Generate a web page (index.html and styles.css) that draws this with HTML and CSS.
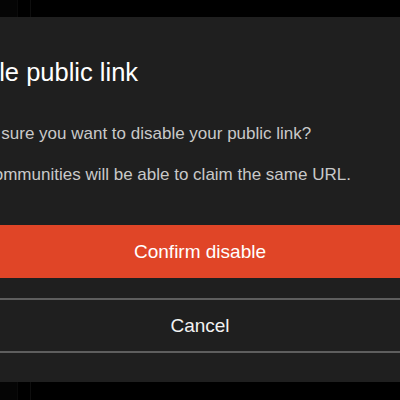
FILE: index.html
```html
<!DOCTYPE html>
<html lang="en">
<head>
<meta charset="utf-8">
<title>Disable public link</title>
<link rel="stylesheet" href="styles.css">
</head>
<body>
<div class="page">
  <div class="rail"></div>
</div>
<div class="overlay">
  <div class="dialog" role="dialog" aria-labelledby="dlg-title">
    <h2 class="title" id="dlg-title">Disable public link</h2>
    <p class="text text-first">Are you sure you want to disable your public link?</p>
    <p class="text">Other communities will be able to claim the same URL.</p>
    <button class="btn btn-confirm" type="button">Confirm disable</button>
    <div class="actions">
      <button class="btn btn-cancel" type="button">Cancel</button>
    </div>
  </div>
</div>
</body>
</html>
```
FILE: styles.css
```css
html, body {
  margin: 0;
  padding: 0;
  height: 100%;
  background: #000;
  overflow: hidden;
  font-family: "Liberation Sans", Arial, sans-serif;
}

.page {
  display: flex;
  height: 100%;
}

.rail {
  width: 17px;
  border-right: 1px solid #0b0b0b;
  background: #050505;
}

.page::after {
  content: "";
  width: 12px;
  border-right: 1px solid #0e0e0e;
}

.overlay {
  position: fixed;
  inset: 0;
  display: flex;
  justify-content: center;
  align-items: flex-start;
  padding-top: 17px;
}

.dialog {
  flex: 0 0 572px;
  width: 572px;
  box-sizing: border-box;
  background: #1f1f1f;
  padding: 40px 24px 29px;
  display: flex;
  flex-direction: column;
}

.title {
  margin: 0 0 35px -4px;
  font-size: 25.5px;
  line-height: 30px;
  font-weight: 400;
  color: #ffffff;
}

.text {
  margin: 0;
  font-size: 17px;
  line-height: 24px;
  color: #c9c9c9;
}

.text-first {
  margin-bottom: 17px;
}

.btn {
  border: 0;
  margin: 0;
  font-family: inherit;
  font-size: 19px;
  cursor: pointer;
  background: transparent;
  width: 100%;
}

.btn-confirm {
  margin-top: 38px;
  height: 53px;
  background: #e04527;
  color: #ffffff;
  margin-left: -24px;
  margin-right: -24px;
  width: auto;
}

.actions {
  margin: 20px -24px 0;
  border-top: 2px solid #5e5e5e;
  border-bottom: 2px solid #5e5e5e;
}

.btn-cancel {
  height: 51px;
  color: #f2f2f2;
  display: block;
}
```
